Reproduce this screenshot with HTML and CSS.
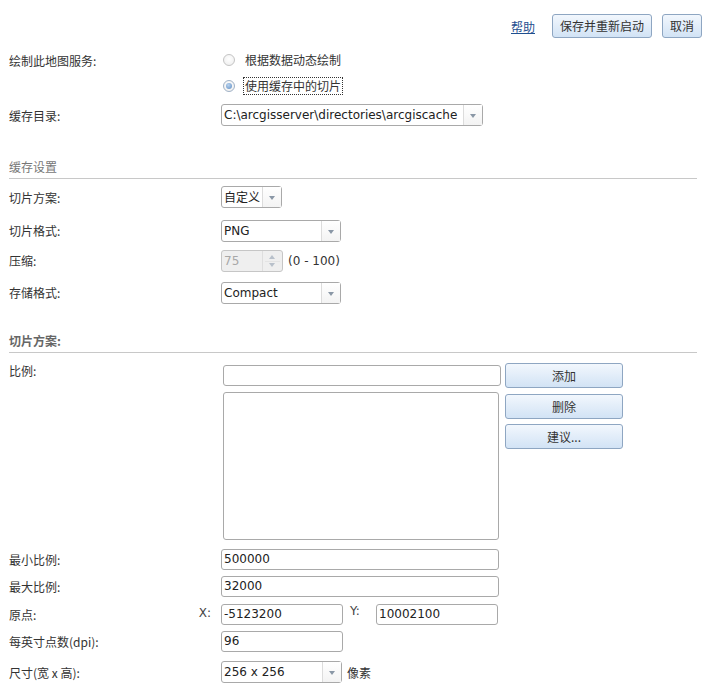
FILE: index.html
```html
<!DOCTYPE html>
<html lang="zh">
<head>
<meta charset="utf-8">
<title>缓存设置</title>
<link rel="stylesheet" href="styles.css">
</head>
<body>
<div class="page">
  <div class="toolbar">
    <a class="help" href="#">帮助</a>
    <button class="btn btn-save">保存并重新启动</button>
    <button class="btn btn-cancel">取消</button>
  </div>

  <div class="form">
    <div class="row row-radio1">
      <div class="label">绘制此地图服务:</div>
      <div class="field"><span class="radio"></span><span class="radio-text">根据数据动态绘制</span></div>
    </div>
    <div class="row row-radio2">
      <div class="label"></div>
      <div class="field"><span class="radio checked"></span><span class="radio-text focus">使用缓存中的切片</span></div>
    </div>
    <div class="row row-dir">
      <div class="label">缓存目录:</div>
      <div class="field">
        <div class="select w-dir"><span class="value">C:\arcgisserver\directories\arcgiscache</span><span class="arrow"></span></div>
      </div>
    </div>

    <div class="section s1">缓存设置</div>

    <div class="row row-scheme">
      <div class="label">切片方案:</div>
      <div class="field">
        <div class="select w-scheme"><span class="value cjk">自定义</span><span class="arrow"></span></div>
      </div>
    </div>
    <div class="row row-format">
      <div class="label">切片格式:</div>
      <div class="field">
        <div class="select w-mid"><span class="value">PNG</span><span class="arrow"></span></div>
      </div>
    </div>
    <div class="row row-compress">
      <div class="label">压缩:</div>
      <div class="field">
        <div class="spinner"><span class="value">75</span><span class="spin"><span class="up"></span><span class="down"></span></span></div>
        <span class="range">(0 - 100)</span>
      </div>
    </div>
    <div class="row row-storage">
      <div class="label">存储格式:</div>
      <div class="field">
        <div class="select w-mid"><span class="value">Compact</span><span class="arrow"></span></div>
      </div>
    </div>

    <div class="section s2">切片方案:</div>

    <div class="row row-scale">
      <div class="label label-top">比例:</div>
      <div class="field scale-field">
        <div class="scale-left">
          <div class="input w-scale"></div>
          <div class="textarea"></div>
        </div>
        <div class="scale-buttons">
          <button class="btn btn-wide">添加</button>
          <button class="btn btn-wide btn-del">删除</button>
          <button class="btn btn-wide">建议...</button>
        </div>
      </div>
    </div>

    <div class="row row-min">
      <div class="label">最小比例:</div>
      <div class="field"><div class="input w-long">500000</div></div>
    </div>
    <div class="row row-max">
      <div class="label">最大比例:</div>
      <div class="field"><div class="input w-long">32000</div></div>
    </div>
    <div class="row row-origin">
      <div class="label label-split"><span>原点:</span><span class="xy">X:</span></div>
      <div class="field">
        <div class="input w-short">-5123200</div>
        <span class="xy y-label">Y:</span>
        <div class="input w-short">10002100</div>
      </div>
    </div>
    <div class="row row-dpi">
      <div class="label">每英寸点数(dpi):</div>
      <div class="field"><div class="input w-short">96</div></div>
    </div>
    <div class="row row-size">
      <div class="label">尺寸(宽 x 高):</div>
      <div class="field">
        <div class="select w-size"><span class="value">256 x 256</span><span class="arrow"></span></div>
        <span class="unit">像素</span>
      </div>
    </div>
  </div>
</div>
</body>
</html>
```

FILE: styles.css
```css
* { box-sizing: border-box; }
html, body { margin: 0; padding: 0; background: #fff; }
body {
  font-family: "Noto Sans CJK SC", "Microsoft YaHei", sans-serif;
  font-size: 12px;
  color: #333;
}
.page { width: 713px; height: 693px; overflow: hidden; padding: 0 11px 0 9px; }

.toolbar {
  display: flex;
  justify-content: flex-end;
  align-items: center;
  height: 38px;
  padding-top: 14px;
  gap: 10px;
}
.help {
  color: #1f4f8f;
  text-decoration: underline;
  font-size: 12px;
  margin-right: 7px;
}
.btn {
  font-family: "Noto Sans CJK SC", sans-serif;
  font-size: 12px;
  color: #333;
  height: 24px;
  padding: 0 8px;
  border: 1px solid #8ea6c2;
  border-radius: 3px;
  background: linear-gradient(#f2f7fd, #d2e3f5);
  line-height: 22px;
}
.btn-save { width: 100px; padding: 0; }
.btn-cancel { width: 40px; padding: 0; }

.form { display: flex; flex-direction: column; }
.row { display: flex; align-items: center; }
.label { width: 212px; flex: none; }
.field { display: flex; align-items: center; }

.row-radio1 { margin-top: 9px; height: 26px; }
.row-radio2 { height: 26px; }
.row-dir { margin-top: 5px; height: 22px; }
.row-scheme { margin-top: 7px; height: 22px; }
.row-format { margin-top: 12px; height: 21px; }
.row-compress { margin-top: 9px; height: 21px; }
.row-storage { margin-top: 11px; height: 21px; }
.row-scale { margin-top: 10px; align-items: flex-start; }
.row-min { margin-top: 9px; height: 21px; }
.row-max { margin-top: 6px; height: 21px; }
.row-origin { margin-top: 7px; height: 21px; }
.row-dpi { margin-top: 6px; height: 21px; }
.row-size { margin-top: 9px; height: 22px; }

.radio {
  width: 12px; height: 12px;
  border-radius: 50%;
  border: 1px solid #c4c4c4;
  background: radial-gradient(circle at 50% 40%, #fff, #ececec);
  margin-left: 2px;
  margin-right: 9px;
  position: relative;
}
.radio.checked { border-color: #9fb1c6; }
.radio.checked::after {
  content: "";
  position: absolute;
  left: 2px; top: 2px;
  width: 6px; height: 6px;
  border-radius: 50%;
  background: radial-gradient(circle at 40% 35%, #b9d3ef, #5d8cc2);
}
.radio-text { color: #333; line-height: 16px; padding: 0 1px; }
.radio-text.focus { outline: 1px dotted #333; }

.section {
  border-bottom: 1px solid #c8c8c8;
  height: 23px;
  line-height: 22px;
  color: #777;
  margin-right: 5px;
}
.s1 { margin-top: 30px; padding-top: 0; }
.s2 { margin-top: 28px; color: #666; font-weight: bold; height: 22px; line-height: 20px; }

.select, .input, .spinner, .textarea {
  border: 1px solid #a9a9a9;
  border-radius: 3px;
  background: #fff;
  font-family: "DejaVu Sans", Verdana, sans-serif;
  font-size: 12px;
  color: #222;
}
.select { display: flex; height: 22px; align-items: stretch; }
.select .value { flex: 1; padding-left: 2px; line-height: 20px; white-space: nowrap; overflow: hidden; }
.select .value.cjk { font-family: "Noto Sans CJK SC", sans-serif; }
.arrow {
  width: 19px;
  flex: none;
  border-left: 1px solid #dcdcdc;
  background: linear-gradient(#fff, #f3f3f3);
  position: relative;
}
.arrow::after {
  content: "";
  position: absolute;
  left: 6px; top: 9px;
  border-left: 3.5px solid transparent;
  border-right: 3.5px solid transparent;
  border-top: 4px solid #8a97a6;
}
.w-dir { width: 262px; }
.w-scheme { width: 61px; }
.w-mid { width: 120px; }
.w-size { width: 121px; }
.row-format .select, .row-storage .select { height: 22px; }

.spinner {
  display: flex;
  width: 62px;
  height: 22px;
  background: #efefef;
  color: #a8a8a8;
  border-color: #c6c6c6;
}
.spinner .value { flex: 1; padding-left: 2px; line-height: 20px; }
.spin {
  width: 20px;
  border-left: 1px solid #dedede;
  position: relative;
}
.spin .up, .spin .down { position: absolute; left: 6px; }
.spin .up { top: 4px; border-left: 3.5px solid transparent; border-right: 3.5px solid transparent; border-bottom: 4px solid #b8c0ca; }
.spin .down { top: 12px; border-left: 3.5px solid transparent; border-right: 3.5px solid transparent; border-top: 4px solid #b8c0ca; }
.spin::after { content: ""; position: absolute; left: 2px; right: 2px; top: 10px; border-top: 1px solid #e4e4e4; }
.range { font-family: "DejaVu Sans", Verdana, sans-serif; font-size: 12px; color: #333; margin-left: 5px; }

.label-top { padding-top: 0; line-height: 16px; }
.scale-field { align-items: flex-start; }
.scale-left { display: flex; flex-direction: column; margin-left: 2px; }
.input { height: 21px; line-height: 19px; padding-left: 2px; white-space: nowrap; }
.w-scale { width: 278px; height: 21px; margin-top: 2px; }
.textarea { width: 276px; height: 148px; margin-top: 6px; }
.scale-buttons { display: flex; flex-direction: column; margin-left: 4px; }
.btn-wide { width: 118px; height: 25px; padding: 0; margin-bottom: 6px; }
.btn-wide.btn-del { margin-bottom: 5px; }

.w-long { width: 278px; }
.w-short { width: 122px; }
.label-split { display: flex; justify-content: space-between; padding-right: 10px; }
.xy { font-family: "DejaVu Sans", Verdana, sans-serif; font-size: 12px; color: #444; }
.y-label { margin-left: 7px; width: 26px; align-self: flex-start; }
.unit { margin-left: 5px; color: #333; }
```
